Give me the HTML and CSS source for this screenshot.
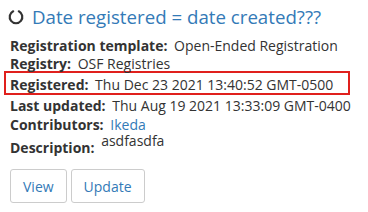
FILE: index.html
```html
<!DOCTYPE html>
<html lang="en">
<head>
    <meta charset="UTF-8">
    <title>Registration</title>
    <link rel="stylesheet" href="styles.css">
</head>
<body>
    <div class="registration">
        <h4 class="reg-title">
            <svg class="status-icon" width="16" height="16" viewBox="0 0 16 16">
                <path d="M5.2 2.3 A6.3 6.3 0 1 0 10.8 2.3" fill="none" stroke="#333" stroke-width="2.2" stroke-linecap="round"/>
            </svg>
            <a href="#">Date registered = date created???</a>
        </h4>
        <div class="reg-row"><strong>Registration template:</strong> Open-Ended Registration</div>
        <div class="reg-row"><strong>Registry:</strong> OSF Registries</div>
        <div class="reg-row highlight"><strong>Registered:</strong> Thu Dec 23 2021 13:40:52 GMT-0500</div>
        <div class="reg-row updated"><strong>Last updated:</strong> Thu Aug 19 2021 13:33:09 GMT-0400</div>
        <div class="reg-row contributors"><strong>Contributors:</strong> <a href="#">Ikeda</a></div>
        <div class="reg-row desc"><strong>Description:</strong> <span class="desc-text">asdfasdfa</span></div>
        <div class="actions">
            <button>View</button>
            <button>Update</button>
        </div>
    </div>
</body>
</html>
```

FILE: styles.css
```css
body {
    margin: 0;
    font-family: "Open Sans", Arial, sans-serif;
    font-size: 14px;
    color: #333;
}
a {
    color: #337ab7;
    text-decoration: none;
}
.registration {
    padding: 5px 10px;
}
.reg-title {
    margin: 0 0 8px -2px;
    font-size: 18.7px;
    font-weight: normal;
    line-height: 24px;
    display: flex;
    align-items: center;
    gap: 8px;
}
.status-icon {
    flex: none;
}
.reg-row {
    line-height: 18px;
}
.reg-row strong {
    margin-right: 3px;
}
.highlight {
    border: 2px solid #e0201d;
    margin: -2px 8px 0 -6px;
    padding: 3px 0 0 4px;
    line-height: 17px;
}
.updated {
    margin-top: 2px;
}
.contributors {
    margin-top: 1px;
}
.desc {
    margin-top: 5px;
}
.desc-text {
    position: relative;
    top: -7px;
}
.actions {
    margin-top: 12px;
    display: flex;
    gap: 4px;
}
button {
    font-family: inherit;
    font-size: 14px;
    color: #337ab7;
    background: #fff;
    border: 1px solid #ccc;
    border-radius: 3px;
    padding: 0 12px;
    height: 34px;
}
```
